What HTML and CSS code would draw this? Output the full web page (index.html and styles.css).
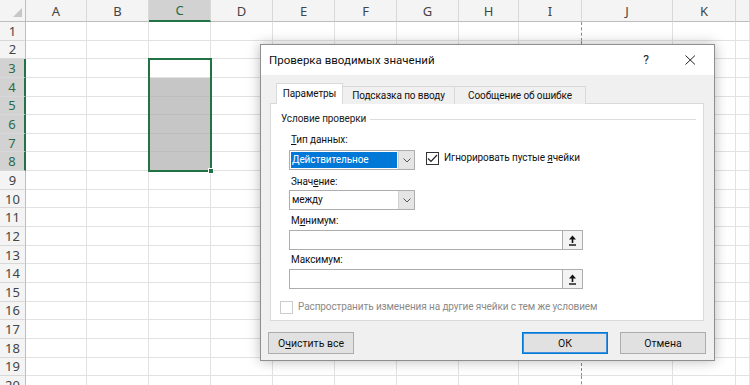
FILE: index.html
```html
<!DOCTYPE html>
<html lang="ru">
<head>
  <meta charset="UTF-8">
  <meta name="viewport" content="width=device-width, initial-scale=1.0">
  <title>Проверка вводимых значений</title>
  <link rel="stylesheet" href="styles.css">
</head>
<body>
  <div class="sheet js-sheet"></div>

  <div class="dialog">
    <div class="dialog-title">
      <span class="title-text">Проверка вводимых значений</span>
      <span class="title-help">?</span>
      <svg class="title-close" width="11" height="10" viewBox="0 0 11 10">
        <path d="M0.5 0.5 L10 9.5 M10 0.5 L0.5 9.5" stroke="#222" stroke-width="1" fill="none"/>
      </svg>
    </div>

    <div class="tabs">
      <div class="tab tab-active tab-params">Параметры</div>
      <div class="tab tab-hint">Подсказка по вводу</div>
      <div class="tab tab-error">Сообщение об ошибке</div>
    </div>

    <div class="panel">
      <div class="group-title"><span>Условие проверки</span></div>

      <div class="group-body">
        <div class="label"><u>Т</u>ип данных:</div>
        <div class="row-first">
          <div class="select">
            <span class="select-value select-focus">Действительное</span>
            <span class="select-btn">
              <svg width="8" height="5" viewBox="0 0 8 5"><path d="M0.5 0.5 L4 4 L7.5 0.5" stroke="#555" fill="none"/></svg>
            </span>
          </div>
          <div class="check">
            <span class="box">
              <svg width="11" height="9" viewBox="0 0 11 9"><path d="M1 4.5 L4 7.5 L10 1" stroke="#222" stroke-width="1.2" fill="none"/></svg>
            </span>
            <span>Игнорировать пустые <u>я</u>чейки</span>
          </div>
        </div>

        <div class="label label-2">Знач<u>е</u>ние:</div>
        <div class="select">
          <span class="select-value">между</span>
          <span class="select-btn">
            <svg width="8" height="5" viewBox="0 0 8 5"><path d="M0.5 0.5 L4 4 L7.5 0.5" stroke="#555" fill="none"/></svg>
          </span>
        </div>

        <div class="label label-3">М<u>и</u>нимум:</div>
        <div class="range">
          <span class="range-input"></span>
          <span class="range-btn">
            <svg width="9" height="11" viewBox="0 0 9 11"><path d="M4.5 0.5 L8 4.5 H5.3 V8 H3.7 V4.5 H1 Z" fill="#111"/><rect x="1" y="9.3" width="7" height="1.4" fill="#111"/></svg>
          </span>
        </div>

        <div class="label label-4">Максимум:</div>
        <div class="range">
          <span class="range-input"></span>
          <span class="range-btn">
            <svg width="9" height="11" viewBox="0 0 9 11"><path d="M4.5 0.5 L8 4.5 H5.3 V8 H3.7 V4.5 H1 Z" fill="#111"/><rect x="1" y="9.3" width="7" height="1.4" fill="#111"/></svg>
          </span>
        </div>
      </div>

      <div class="check check-disabled">
        <span class="box"></span>
        <span>Распространить изменения на другие ячейки с тем же условием</span>
      </div>
    </div>

    <div class="dialog-buttons">
      <button class="btn">О<u>ч</u>истить все</button>
      <span class="spacer"></span>
      <button class="btn btn-default">ОК</button>
      <button class="btn">Отмена</button>
    </div>
  </div>

  <script>
    const sheet = document.querySelector('.js-sheet');
    const cols = ['A','B','C','D','E','F','G','H','I','J','K',''];
    let html = '<div class="corner"><span class="corner-tri"></span></div>';

    cols.forEach(c => {
      html += `<div class="col-head${c === 'C' ? ' is-sel' : ''}">${c}</div>`;
    });

    for (let r = 1; r <= 20; r++) {
      const sel = r >= 3 && r <= 8;
      html += `<div class="row-head${sel ? ' is-sel' : ''}">${r}</div>`;
      cols.forEach(c => {
        let cls = 'cell';
        if (c === 'C' && r >= 4 && r <= 8) cls += ' cell-shade';
        if (c === 'I') cls += ' cell-break';
        html += `<div class="${cls}"></div>`;
      });
    }

    // selection frame C3:C8
    html += '<div class="selection"><span class="fill-handle"></span></div>';
    sheet.innerHTML = html;
  </script>
</body>
</html>
```

FILE: styles.css
```css
* {
  box-sizing: border-box;
}
body {
  margin: 0;
  width: 750px;
  height: 385px;
  overflow: hidden;
  background: #fff;
  font-family: Roboto, "Noto Sans", sans-serif;
}

/* sheet */
.sheet {
  position: relative;
  display: grid;
  grid-template-columns: 26px 61px 62px 62px 62px 62px 62px 62px 60px 63px 91px 63px 1fr;
  grid-template-rows: 22px repeat(20, 18.65px);
  font-family: "Noto Sans", sans-serif;
  font-size: 13px;
  color: #444;
}
.corner {
  display: flex;
  align-items: flex-end;
  justify-content: flex-end;
  padding: 0 3px 4px 0;
  background: #f4f4f4;
  border-right: 1px solid #bdbdbd;
  border-bottom: 1px solid #bdbdbd;
}
.corner-tri {
  width: 0;
  height: 0;
  border-left: 9px solid transparent;
  border-bottom: 9px solid #c6c6c6;
}
.col-head,
.row-head {
  display: flex;
  align-items: center;
  justify-content: center;
  background: #f4f4f4;
}
.col-head {
  border-right: 1px solid #d8d8d8;
  border-bottom: 1px solid #bdbdbd;
}
.row-head {
  border-right: 1px solid #bdbdbd;
  border-bottom: 1px solid #d8d8d8;
}
.col-head.is-sel {
  background: #d2d2d2;
  color: #2a6a45;
  border-bottom: 2px solid #217346;
}
.row-head.is-sel {
  background: #d2d2d2;
  color: #2a6a45;
  border-right: 2px solid #217346;
}
.cell {
  border-right: 1px solid #e2e2e2;
  border-bottom: 1px solid #e2e2e2;
}
.cell-shade {
  background: #c6c6c6;
  border-bottom-color: #bdbdbd;
}
.cell-break {
  border-right: 1px dashed #8a8a8a;
}
.selection {
  position: absolute;
  grid-column: 4 / 5;
  grid-row: 4 / 10;
  top: -1px;
  left: -1px;
  right: -1px;
  bottom: -1px;
  border: 2px solid #217346;
}
.fill-handle {
  position: absolute;
  right: -4px;
  bottom: -4px;
  width: 6px;
  height: 6px;
  background: #217346;
  border: 1px solid #fff;
}

/* dialog */
.dialog {
  position: absolute;
  left: 260px;
  top: 44px;
  width: 455px;
  height: 317px;
  display: flex;
  flex-direction: column;
  background: #f0f0f0;
  border: 1px solid #8f8f8f;
  box-shadow: 0 0 12px rgba(0, 0, 0, 0.28);
  font-size: 10px;
  letter-spacing: -0.1px;
  color: #111;
}
.dialog-title {
  display: flex;
  align-items: center;
  height: 30px;
  padding-left: 8px;
  background: #fff;
  font-size: 11.5px;
  letter-spacing: 0;
}
.title-text {
  flex: 1;
}
.title-help {
  margin-right: 36px;
  font-size: 12px;
  color: #222;
}
.title-close {
  margin-right: 18px;
}
.tabs {
  display: flex;
  align-items: flex-end;
  height: 21px;
  margin: 8px 0 -1px 16px;
  position: relative;
}
.tab {
  height: 18px;
  display: flex;
  align-items: center;
  justify-content: center;
  border: 1px solid #d9d9d9;
  border-bottom: none;
  margin-left: -1px;
  background: #f0f0f0;
}
.tab-active {
  height: 21px;
  background: #fff;
  padding-bottom: 2px;
}
.tab-params {
  width: 67px;
}
.tab-hint {
  width: 113px;
}
.tab-error {
  width: 132px;
}
.panel {
  height: 218px;
  margin: 0 10px 0 9px;
  background: #fff;
  border: 1px solid #d9d9d9;
  padding: 7px 7px 0 10px;
}
.group-title {
  display: flex;
  align-items: center;
  line-height: 16px;
  color: #222;
}
.group-title::after {
  content: "";
  flex: 1;
  height: 1px;
  margin-left: 4px;
  background: #dcdcdc;
}
.group-body {
  padding-left: 8px;
}
.label {
  line-height: 16px;
  margin-top: 5px;
  padding-left: 2px;
}
.label-2 {
  margin-top: 4px;
}
.label-3 {
  margin-top: 3px;
}
.label-4 {
  margin-top: 2px;
}
.row-first {
  display: flex;
  align-items: flex-start;
  margin-top: 2px;
}
.select {
  display: flex;
  width: 126px;
  height: 20px;
  border: 1px solid #adadad;
  background: #fff;
}
.select-value {
  flex: 1;
  margin: 1px;
  padding-left: 1px;
  line-height: 16px;
}
.select-focus {
  background: #0078d7;
  color: #fff;
}
.select-btn {
  width: 16px;
  display: flex;
  align-items: center;
  justify-content: center;
  background: #e5e5e5;
  border-left: 1px solid #cfcfcf;
}
.range {
  display: flex;
  width: 294px;
  height: 20px;
  margin-top: 1px;
}
.range-input {
  flex: 1;
  border: 1px solid #adadad;
  background: #fff;
}
.range-btn {
  width: 21px;
  margin-left: -1px;
  display: flex;
  align-items: center;
  justify-content: center;
  border: 1px solid #adadad;
  background: #f3f3f3;
}
.check {
  display: flex;
  align-items: center;
  gap: 5px;
  margin-left: 11px;
  line-height: 16px;
}
.box {
  width: 13px;
  height: 13px;
  display: flex;
  align-items: center;
  justify-content: center;
  border: 1px solid #333;
  background: #fff;
}
.check-disabled {
  margin: 10px 0 0 -1px;
  color: #8a8a8a;
}
.check-disabled .box {
  border-color: #cccccc;
}
.dialog-buttons {
  display: flex;
  margin: 11px 8px 0 7px;
}
.spacer {
  flex: 1;
}
.btn {
  height: 22px;
  width: 86px;
  padding: 0;
  font-family: inherit;
  font-size: 10.5px;
  color: #111;
  background: #e1e1e1;
  border: 1px solid #adadad;
}
.btn + .btn {
  margin-left: 12px;
}
.btn-default {
  border-color: #0078d7;
  box-shadow: inset 0 0 0 1px #3c93dd;
}
```
